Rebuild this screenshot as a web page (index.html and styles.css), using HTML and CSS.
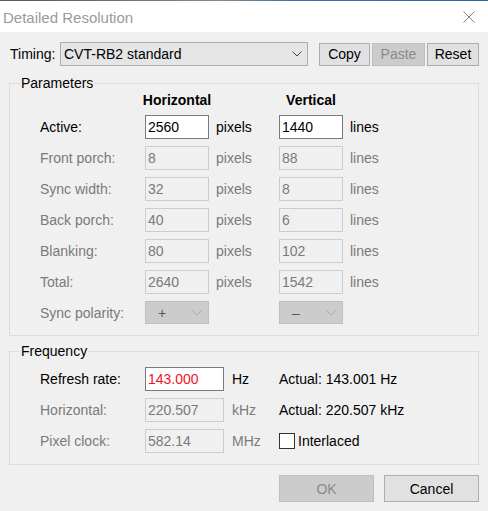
FILE: index.html
```html
<!DOCTYPE html>
<html>
<head>
<meta charset="utf-8">
<link rel="stylesheet" href="styles.css">
</head>
<body>
<div class="topline"></div>
<div class="titlebar">
  <span class="title">Detailed Resolution</span>
  <svg class="close" width="12" height="12" viewBox="0 0 12 12"><path d="M0.5 0.5 L11.5 11.5 M11.5 0.5 L0.5 11.5" stroke="#808080" stroke-width="1" fill="none"/></svg>
</div>
<div class="body">
  <div class="timing">
    <span class="tlabel">Timing:</span>
    <div class="combo">
      <span>CVT-RB2 standard</span>
      <svg width="10" height="6" viewBox="0 0 10 6"><polyline points="0.5,0.5 5,5 9.5,0.5" stroke="#404040" stroke-width="1" fill="none"/></svg>
    </div>
    <div class="btn copy">Copy</div>
    <div class="btn paste disabled">Paste</div>
    <div class="btn reset">Reset</div>
  </div>

  <div class="group params">
    <div class="legend">Parameters</div>
    <div class="pgrid">
      <div></div><div class="head">Horizontal</div><div></div><div class="head">Vertical</div><div></div>

      <div class="lbl">Active:</div><div class="inp">2560</div><div class="unit">pixels</div><div class="inp">1440</div><div class="unit">lines</div>

      <div class="lbl dis">Front porch:</div><div class="inp off">8</div><div class="unit dis">pixels</div><div class="inp off">88</div><div class="unit dis">lines</div>

      <div class="lbl dis">Sync width:</div><div class="inp off">32</div><div class="unit dis">pixels</div><div class="inp off">8</div><div class="unit dis">lines</div>

      <div class="lbl dis">Back porch:</div><div class="inp off">40</div><div class="unit dis">pixels</div><div class="inp off">6</div><div class="unit dis">lines</div>

      <div class="lbl dis">Blanking:</div><div class="inp off">80</div><div class="unit dis">pixels</div><div class="inp off">102</div><div class="unit dis">lines</div>

      <div class="lbl dis">Total:</div><div class="inp off">2640</div><div class="unit dis">pixels</div><div class="inp off">1542</div><div class="unit dis">lines</div>

      <div class="lbl dis">Sync polarity:</div>
      <div class="pcell"><div class="pcombo"><span class="sign">+</span><svg width="10" height="6" viewBox="0 0 10 6"><polyline points="0.5,0.5 5,5 9.5,0.5" stroke="#a8a8a8" stroke-width="1" fill="none"/></svg></div></div>
      <div></div>
      <div class="pcell"><div class="pcombo"><span class="sign">–</span><svg width="10" height="6" viewBox="0 0 10 6"><polyline points="0.5,0.5 5,5 9.5,0.5" stroke="#a8a8a8" stroke-width="1" fill="none"/></svg></div></div>
      <div></div>
    </div>
  </div>

  <div class="group freq">
    <div class="legend">Frequency</div>
    <div class="fgrid">
      <div class="lbl">Refresh rate:</div><div class="inp red">143.000</div><div class="funit">Hz</div><div class="actual">Actual: 143.001 Hz</div>
      <div class="lbl dis">Horizontal:</div><div class="inp off">220.507</div><div class="funit dis">kHz</div><div class="actual">Actual: 220.507 kHz</div>
      <div class="lbl dis">Pixel clock:</div><div class="inp off">582.14</div><div class="funit dis">MHz</div><div class="actual"><span class="check"></span><span class="chk-label">Interlaced</span></div>
    </div>
  </div>

  <div class="buttons">
    <div class="btn big disabled">OK</div>
    <div class="btn big">Cancel</div>
  </div>
</div>
</body>
</html>
```

FILE: styles.css
```css
html, body {
  margin: 0;
  padding: 0;
}
body {
  width: 488px;
  height: 511px;
  background: #f0f0f0;
  font-family: "Liberation Sans", Arial, sans-serif;
  font-size: 14px;
  color: #000;
  overflow: hidden;
}
.topline {
  height: 1px;
  background: linear-gradient(to right, #5a5550 0%, #7a6f66 25%, #8a8a8a 45%, #3f72a6 60%, #2a66a8 100%);
}
.titlebar {
  height: 31px;
  background: #fff;
  display: flex;
  align-items: center;
  justify-content: space-between;
  padding-left: 3px;
  padding-right: 13px;
}
.title {
  font-size: 15px;
  color: #9a9a9a;
  margin-top: 2px;
}
.close {
  margin-top: 1px;
}
.body {
  padding: 10px 9px 0 9px;
}
.timing {
  display: flex;
  align-items: center;
  height: 24px;
}
.tlabel {
  width: 50px;
  padding-left: 1px;
  flex: none;
}
.combo {
  box-sizing: border-box;
  width: 248px;
  height: 24px;
  background: #e5e5e5;
  border: 1px solid #adadad;
  display: flex;
  align-items: center;
  justify-content: space-between;
  padding: 0 5px 0 3px;
  flex: none;
}
.btn {
  box-sizing: border-box;
  height: 23px;
  background: #e1e1e1;
  border: 1px solid #adadad;
  display: flex;
  align-items: center;
  justify-content: center;
  flex: none;
}
.btn.disabled {
  background: #cccccc;
  border-color: #bfbfbf;
  color: #8a8a8a;
}
.copy { width: 51px; margin-left: 11px; }
.paste { width: 53px; margin-left: 2px; }
.reset { width: 52px; margin-left: 2px; }

.group {
  border: 1px solid #dcdcdc;
  padding-left: 30px;
}
.params {
  margin-top: 17px;
  padding-bottom: 10px;
}
.freq {
  margin-top: 15px;
  padding-bottom: 11px;
}
.legend {
  width: fit-content;
  margin: -9px 0 0 -20px;
  padding: 0 1px;
  height: 16px;
  line-height: 16px;
  background: #f0f0f0;
}
.pgrid {
  display: grid;
  grid-template-columns: 105px 64px 70px 64px auto;
  grid-template-rows: 17px repeat(7, 24px);
  row-gap: 7px;
}
.head {
  font-weight: bold;
  display: flex;
  align-items: center;
  justify-content: center;
  white-space: nowrap;
}
.lbl, .unit, .funit, .actual {
  display: flex;
  align-items: center;
  white-space: nowrap;
}
.unit { padding-left: 7px; }
.funit { padding-left: 8px; }
.dis { color: #7a7a7a; }
.inp {
  box-sizing: border-box;
  height: 24px;
  background: #fff;
  border: 1px solid #7a7a7a;
  padding-left: 2px;
  display: flex;
  align-items: center;
}
.inp.off {
  background: #f0f0f0;
  border-color: #cccccc;
  color: #7a7a7a;
}
.inp.red {
  color: #f5101e;
}
.pcell {
  display: flex;
  align-items: flex-start;
}
.pcombo {
  box-sizing: border-box;
  width: 64px;
  height: 23px;
  background: #cccccc;
  border: 1px solid #bfbfbf;
  display: flex;
  align-items: center;
  justify-content: space-between;
  padding: 0 6px 0 12px;
}
.sign {
  color: #5a5a5a;
}
.fgrid {
  margin-top: 8px;
  display: grid;
  grid-template-columns: 105px 79px 55px auto;
  grid-auto-rows: 24px;
  row-gap: 7px;
}
.check {
  box-sizing: border-box;
  width: 16px;
  height: 16px;
  border: 1px solid #333;
  background: #fff;
  margin-top: -1px;
}
.chk-label {
  margin-left: 3px;
}
.buttons {
  margin-top: 10px;
  display: flex;
  justify-content: flex-end;
  gap: 10px;
}
.btn.big {
  width: 95px;
  height: 27px;
}
```
